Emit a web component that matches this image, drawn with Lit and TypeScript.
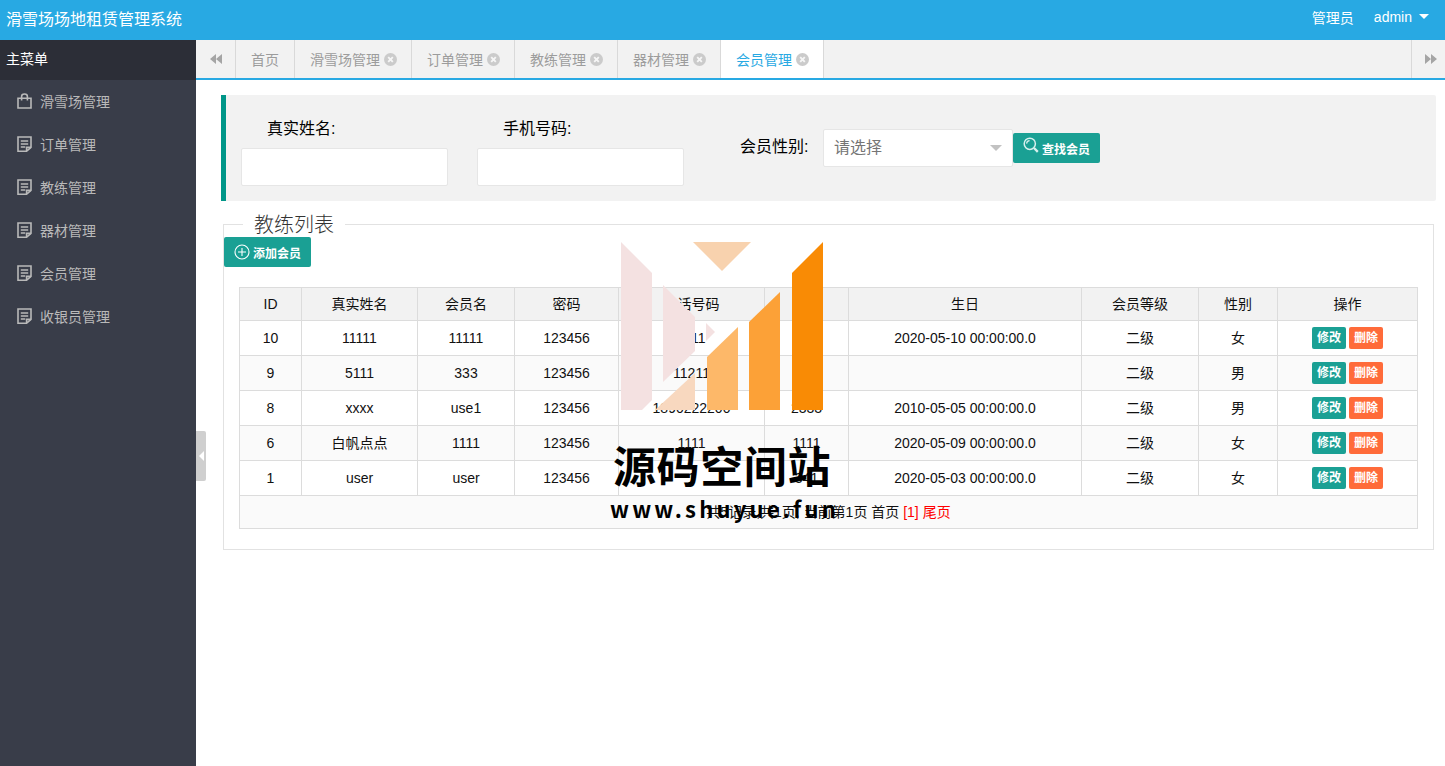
import { LitElement, html, css, svg } from "lit";
import { customElement } from "lit/decorators.js";

const menus = ["滑雪场管理", "订单管理", "教练管理", "器材管理", "会员管理", "收银员管理"];
const tabs = ["滑雪场管理", "订单管理", "教练管理", "器材管理", "会员管理"];
const heads = ["ID", "真实姓名", "会员名", "密码", "电话号码", "地址", "生日", "会员等级", "性别", "操作"];
const rows = [
  ["10", "11111", "11111", "123456", "1111", "111", "2020-05-10 00:00:00.0", "二级", "女"],
  ["9", "5111", "333", "123456", "11211", "111", "", "二级", "男"],
  ["8", "xxxx", "use1", "123456", "1890222200", "2333", "2010-05-05 00:00:00.0", "二级", "男"],
  ["6", "白帆点点", "1111", "123456", "1111", "1111", "2020-05-09 00:00:00.0", "二级", "女"],
  ["1", "user", "user", "123456", "1", "341", "2020-05-03 00:00:00.0", "二级", "女"],
];
const colWidths = [62, 116, 97, 104, 146, 84, 233, 117, 79, 140];

const bagIcon = html`<svg class="nav-icon" viewBox="0 0 15 16" fill="none" stroke="currentColor" stroke-width="1.6">
  <path d="M1 5.2h13v9.8H1z" />
  <path d="M4.6 7.5V3.4C4.6 1.9 5.8 1 7.5 1s2.9.9 2.9 2.4v4.1" />
</svg>`;
const docIcon = html`<svg class="nav-icon" viewBox="0 0 15 16" fill="none" stroke="currentColor" stroke-width="1.6">
  <path d="M1 1h13v10.4L9.6 15.2H1z" />
  <path d="M3.8 5h7.4M3.8 8h7.4M3.8 11h4.4M9.6 15v-3.6H14" />
</svg>`;
const closeIcon = html`<svg class="tab-close" viewBox="0 0 13 13">
  <circle cx="6.5" cy="6.5" r="6.5" fill="#cbcbcb" />
  <path d="M4.2 4.2l4.6 4.6M8.8 4.2l-4.6 4.6" stroke="#f6f6f6" stroke-width="1.9" />
</svg>`;

// polygons of the logo stamped over the page
const markShapes = [
  ["0,0 31,31 31,158 21,168 0,168", "#f4e1e1"],
  ["72,0 130,0 101,29", "#f8d2ae"],
  ["42,43 74,75 74,109 42,140", "#f4e1e1"],
  ["85,81 94,90 85,99", "#f4e1e1"],
  ["74,131 74,168 34,168", "#f8d8bf"],
  ["86,115 117,85 117,168 86,168", "#fdb869"],
  ["128,80 159,50 159,168 128,168", "#fca137"],
  ["171,31 202,0 202,168 171,168", "#f98b05"],
];

@customElement("app-root")
export class AppRoot extends LitElement {
  static styles = css`
    :host {
      display: block;
      position: relative;
      height: 766px;
      overflow: hidden;
      background: #fff;
      font-family: "Liberation Sans", "Noto Sans CJK SC", sans-serif;
      font-size: 14px;
      color: #000;
    }
    .topbar {
      height: 40px;
      background: #28a9e3;
      color: #fff;
      display: flex;
      align-items: center;
      justify-content: space-between;
      padding: 0 16px 0 6px;
    }
    .brand {
      font-size: 16px;
      margin-top: -5px;
    }
    .user {
      display: flex;
      align-items: center;
      font-size: 14px;
      margin-top: -6px;
    }
    .user .role {
      margin-right: 20px;
    }
    .caret {
      width: 0;
      height: 0;
      border: 5px solid transparent;
      border-top: 5px solid #fff;
      border-bottom: 0;
      margin-left: 7px;
      margin-top: -1px;
    }
    .body {
      display: flex;
      height: 726px;
    }
    .side {
      width: 196px;
      flex: none;
      background: #393d49;
    }
    .side-title {
      height: 40px;
      line-height: 38px;
      padding-left: 6px;
      background: #2c2e37;
      color: #fff;
      font-size: 14px;
    }
    .nav-item {
      display: flex;
      align-items: center;
      box-sizing: border-box;
      height: 43px;
      padding: 0 0 2px 17px;
      color: #b9b9b9;
      font-size: 14px;
    }
    .nav-icon {
      width: 15px;
      height: 16px;
      margin-right: 8px;
      flex: none;
    }
    .main {
      flex: 1;
      min-width: 0;
      position: relative;
    }
    .tabbar {
      height: 38px;
      background: #f2f2f2;
      border-bottom: 2px solid #28a9e3;
      display: flex;
      color: #9c9c9c;
      font-size: 14px;
    }
    .scroll {
      display: flex;
      align-items: center;
      justify-content: center;
      flex: none;
      color: #a5a5a5;
    }
    .scroll.left {
      width: 39px;
      border-right: 1px solid #d9d9d9;
    }
    .scroll.right {
      width: 28px;
      margin-left: auto;
      padding-left: 5px;
      border-left: 1px solid #d9d9d9;
    }
    .tab {
      display: flex;
      align-items: center;
      padding: 0 15px;
      border-right: 1px solid #d9d9d9;
      white-space: nowrap;
    }
    .tab.first {
      width: 28px;
      justify-content: center;
    }
    .tab.active {
      background: #fff;
      color: #28a9e3;
      height: 38px;
    }
    .tab-close {
      width: 13px;
      height: 13px;
      margin-left: 4px;
      margin-right: -1px;
    }
    .quote {
      margin: 15px 9px 0 25px;
      height: 106px;
      box-sizing: border-box;
      background: #f2f2f2;
      border-left: 5px solid #009688;
      border-radius: 0 2px 2px 0;
      display: flex;
      padding-left: 15px;
    }
    .field {
      width: 207px;
      margin-right: 29px;
      padding-top: 26px;
    }
    .field label {
      display: block;
      font-size: 16px;
      line-height: 16px;
      height: 27px;
      padding-left: 26px;
    }
    .input {
      height: 38px;
      box-sizing: border-box;
      background: #fff;
      border: 1px solid #e6e6e6;
      border-radius: 2px;
    }
    .inline-field {
      display: flex;
      align-items: flex-start;
      margin-left: 27px;
      padding-top: 34px;
    }
    .inline-field label {
      width: 83px;
      flex: none;
      font-size: 16px;
      line-height: 36px;
    }
    .select {
      width: 190px;
      height: 38px;
      box-sizing: border-box;
      background: #fff;
      border: 1px solid #e6e6e6;
      border-radius: 2px;
      display: flex;
      align-items: center;
      justify-content: space-between;
      padding: 0 10px;
      color: #757575;
      font-size: 16px;
      line-height: 34px;
    }
    .select i {
      width: 0;
      height: 0;
      border: 6px solid transparent;
      border-top: 6px solid #c2c2c2;
      border-bottom: 0;
    }
    .btn {
      display: inline-flex;
      align-items: center;
      background: #1aa094;
      color: #fff;
      border-radius: 2px;
      font-size: 12px;
      font-weight: 700;
      white-space: nowrap;
    }
    .btn.big {
      width: 87px;
      height: 30px;
      box-sizing: border-box;
      padding-left: 10px;
    }
    .btn.find {
      margin-top: 4px;
    }
    .btn svg {
      width: 16px;
      height: 16px;
      margin-right: 3px;
      flex: none;
    }
    .btn.find svg {
      margin-top: -6px;
    }
    .list {
      margin: 23px 11px 0 27px;
      height: 326px;
      box-sizing: border-box;
      border: 1px solid #e2e2e2;
      position: relative;
      padding: 12px 15px 0 15px;
    }
    .legend {
      position: absolute;
      left: 19px;
      top: -11px;
      height: 22px;
      line-height: 22px;
      padding: 0 11px;
      background: #fff;
      font-size: 20px;
      font-weight: 300;
      color: #333;
    }
    .add {
      margin-left: -15px;
      display: flex;
    }
    .grid {
      margin-top: 20px;
      width: 1179px;
      border-collapse: collapse;
      table-layout: fixed;
      font-size: 14px;
      line-height: 16px;
      color: #111;
    }
    .grid th,
    .grid td {
      border: 1px solid #dcdcdc;
      text-align: center;
      padding: 0;
      font-weight: 400;
    }
    .grid th {
      height: 32px;
      background: #f2f2f2;
    }
    .grid td {
      height: 34px;
    }
    .grid tbody tr:nth-child(even) td,
    .grid .pager td {
      background: #fafafa;
    }
    .grid .pager td {
      height: 32px;
    }
    .red {
      color: #f00;
    }
    .mini {
      display: inline-block;
      width: 34px;
      height: 22px;
      line-height: 22px;
      text-align: center;
      border-radius: 2px;
      color: #fff;
      font-size: 12px;
      font-weight: 700;
      background: #1aa094;
      vertical-align: middle;
    }
    .mini + .mini {
      margin-left: 3px;
      background: #ff6b3a;
    }
    .fold {
      position: absolute;
      left: 0;
      top: 391px;
      width: 10px;
      height: 50px;
      background: #cfcfcf;
      border-radius: 0 2px 2px 0;
      display: flex;
      align-items: center;
      justify-content: center;
    }
    .fold i {
      width: 0;
      height: 0;
      border: 5px solid transparent;
      border-right: 5px solid #fff;
      border-left: 0;
    }
    .mark {
      position: absolute;
      left: 604px;
      top: 242px;
      width: 240px;
      pointer-events: none;
      font-family: "Noto Sans CJK SC", sans-serif;
      font-weight: 700;
      color: #000;
    }
    .mark svg {
      display: block;
      width: 202px;
      height: 168px;
      margin-left: 17px;
    }
    .mark-title {
      margin: 29px 0 0 9px;
      font-size: 43px;
      line-height: 50px;
      letter-spacing: 0.6px;
      white-space: nowrap;
    }
    .mark-url {
      margin: 5px 0 0 6px;
      font-size: 22px;
      line-height: 28px;
      letter-spacing: 3.2px;
      white-space: nowrap;
    }
  `;

  render() {
    return html`
      <div class="topbar">
        <div class="brand">滑雪场场地租赁管理系统</div>
        <div class="user">
          <span class="role">管理员</span><span>admin</span><i class="caret"></i>
        </div>
      </div>
      <div class="body">
        <aside class="side">
          <div class="side-title">主菜单</div>
          ${menus.map(
            (m, i) => html`<div class="nav-item">${i === 0 ? bagIcon : docIcon}${m}</div>`
          )}
        </aside>
        <div class="main">
          <div class="tabbar">
            <div class="scroll left">${this.arrows(true)}</div>
            <div class="tab first">首页</div>
            ${tabs.map(
              (t, i) => html`<div class="tab ${i === 4 ? "active" : ""}">${t}${closeIcon}</div>`
            )}
            <div class="scroll right">${this.arrows(false)}</div>
          </div>
          <div class="quote">
            <div class="field">
              <label>真实姓名:</label>
              <div class="input"></div>
            </div>
            <div class="field">
              <label>手机号码:</label>
              <div class="input"></div>
            </div>
            <div class="inline-field">
              <label>会员性别:</label>
              <div class="select">请选择<i></i></div>
              <div class="btn big find">
                <svg viewBox="0 0 16 16" fill="none" stroke="#d8f0ee">
                  <circle cx="6.8" cy="6.8" r="5.6" stroke-width="1.5" />
                  <path d="M3.6 6.6a3.2 3.2 0 0 1 3-3" stroke-width="1.2" />
                  <path d="M11 11l3.8 3.8" stroke-width="2.4" />
                </svg>
                查找会员
              </div>
            </div>
          </div>
          <section class="list">
            <div class="legend">教练列表</div>
            <div class="add">
              <div class="btn big">
                <svg viewBox="0 0 16 16" fill="none" stroke="#fff" stroke-width="1.1">
                  <circle cx="8" cy="8" r="7" />
                  <path d="M8 4v8M4 8h8" />
                </svg>
                添加会员
              </div>
            </div>
            <table class="grid">
              <colgroup>
                ${colWidths.map((w) => html`<col style="width:${w}px" />`)}
              </colgroup>
              <thead>
                <tr>${heads.map((h) => html`<th>${h}</th>`)}</tr>
              </thead>
              <tbody>
                ${rows.map(
                  (r) => html`<tr>
                    ${r.map((c) => html`<td>${c}</td>`)}
                    <td><span class="mini">修改</span><span class="mini">删除</span></td>
                  </tr>`
                )}
                <tr class="pager">
                  <td colspan="10">
                    共5记录,共1页, 当前第1页 首页 <span class="red">[1] 尾页</span>
                  </td>
                </tr>
              </tbody>
            </table>
          </section>
          <div class="fold"><i></i></div>
        </div>
      </div>
      <div class="mark">
        <svg viewBox="0 0 202 168">
          ${markShapes.map(([p, c]) => svg`<polygon points=${p} fill=${c} />`)}
        </svg>
        <div class="mark-title">源码空间站</div>
        <div class="mark-url">www.shuyue.fun</div>
      </div>
    `;
  }

  private arrows(left: boolean) {
    return html`<svg width="12" height="10" viewBox="0 0 12 10" fill="currentColor">
      ${left
        ? svg`<path d="M6 0v10L0 5zM12 0v10L6 5z" />`
        : svg`<path d="M0 0v10l6-5zM6 0v10l6-5z" />`}
    </svg>`;
  }
}
